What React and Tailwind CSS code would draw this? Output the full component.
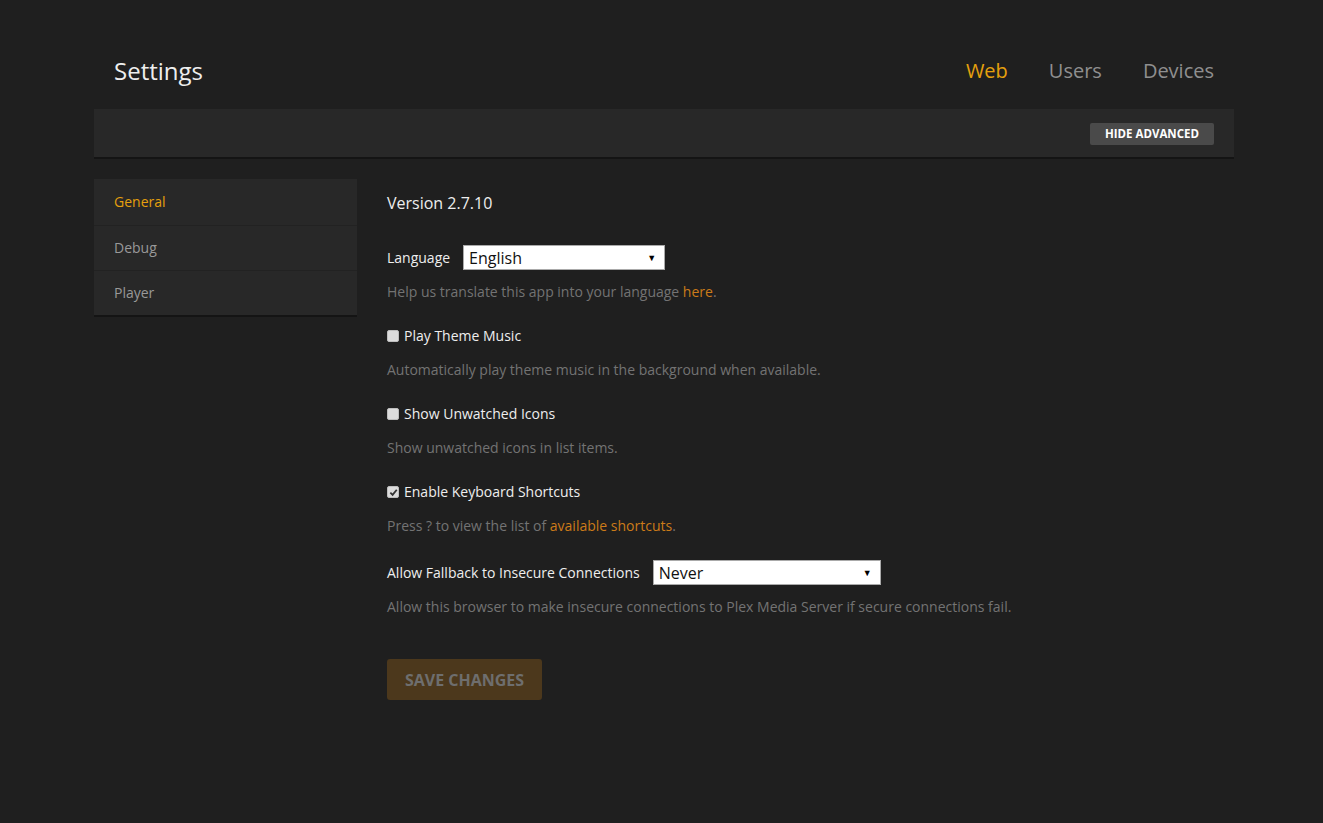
import { useState } from 'react'

const font = { fontFamily: '"Open Sans", "Noto Sans", sans-serif' }

function Check({ checked }) {
  return (
    <span className="flex items-center justify-center w-[12px] h-[12px] rounded-[2px] bg-[#dcdcdc] border border-[#bdbdbd] shrink-0">
      {checked && (
        <svg width="9" height="9" viewBox="0 0 10 10">
          <path d="M1.5 5.2 L4 7.6 L8.6 2" fill="none" stroke="#333" strokeWidth="2" />
        </svg>
      )}
    </span>
  )
}

function Select({ value, w }) {
  return (
    <div className={`flex items-center justify-between h-[25px] bg-white border border-[#aaa] pl-[5px] pr-[8px] text-base text-[#111] ${w}`}>
      <span className="leading-none">{value}</span>
      <span className="text-[9px] text-black">▼</span>
    </div>
  )
}

function CheckRow({ label, checked, children }) {
  return (
    <div className="mb-[24px]">
      <div className="flex items-center gap-[5px] h-[20px] text-sm font-medium text-[#eee]">
        <Check checked={checked} />
        <span>{label}</span>
      </div>
      <p className="mt-[14px] h-[20px] text-sm text-[#737373]">{children}</p>
    </div>
  )
}

export default function App() {
  const [tab] = useState('Web')
  return (
    <div className="min-h-[823px] bg-[#1f1f1f]" style={font}>
      <div className="w-[1140px] ml-[94px]">
        <div className="flex items-center justify-between h-[109px] pt-[33px] px-[20px]">
          <h1 className="text-2xl text-[#eee]">Settings</h1>
          <nav className="flex gap-[41px] text-[20px]">
            {['Web', 'Users', 'Devices'].map(t => (
              <span key={t} className={t === tab ? 'text-[#e5a00d]' : 'text-[#8f8f8f]'}>{t}</span>
            ))}
          </nav>
        </div>
        <div className="flex items-center justify-end h-[50px] pt-[1px] bg-[#282828] border-b-2 border-[#141414] pr-[20px]">
          <button className="h-[22px] px-[15px] rounded-[2px] bg-[#4a4a4a] text-white text-[11.5px] font-bold uppercase leading-none">Hide Advanced</button>
        </div>
        <div className="flex mt-[20px]">
          <aside className="w-[263px] self-start bg-[#282828] border-b-2 border-[#141414]">
            {['General', 'Debug', 'Player'].map((s, i) => (
              <div key={s} className={`flex items-center pl-[20px] text-sm ${i > 0 ? 'h-[45px] border-t border-[#222]' : 'h-[46px]'} ${i === 0 ? 'text-[#e5a00d]' : 'text-[#999]'}`}>{s}</div>
            ))}
          </aside>
          <main className="ml-[30px] pt-[12px] flex-1">
            <h2 className="text-base font-medium text-[#eee] leading-6">Version 2.7.10</h2>
            <div className="flex items-center mt-[30px]">
              <span className="text-sm font-medium text-[#eee]">Language</span>
              <div className="ml-[13px]"><Select value="English" w="w-[202px]" /></div>
            </div>
            <p className="mt-[12px] mb-[24px] h-[20px] text-sm text-[#737373]">
              Help us translate this app into your language <span className="text-[#cc7b19]">here</span>.
            </p>
            <CheckRow label="Play Theme Music">Automatically play theme music in the background when available.</CheckRow>
            <CheckRow label="Show Unwatched Icons">Show unwatched icons in list items.</CheckRow>
            <CheckRow label="Enable Keyboard Shortcuts" checked>
              Press ? to view the list of <span className="text-[#cc7b19]">available shortcuts</span>.
            </CheckRow>
            <div className="flex items-center">
              <span className="text-sm font-medium text-[#eee]">Allow Fallback to Insecure Connections</span>
              <div className="ml-[13px]"><Select value="Never" w="w-[228px]" /></div>
            </div>
            <p className="mt-[12px] h-[20px] text-sm text-[#737373]">
              Allow this browser to make insecure connections to Plex Media Server if secure connections fail.
            </p>
            <button className="mt-[42px] w-[155px] h-[41px] rounded-[3px] bg-[#4c381c] text-[#6e6e6e] text-base font-bold uppercase">Save Changes</button>
          </main>
        </div>
      </div>
    </div>
  )
}
